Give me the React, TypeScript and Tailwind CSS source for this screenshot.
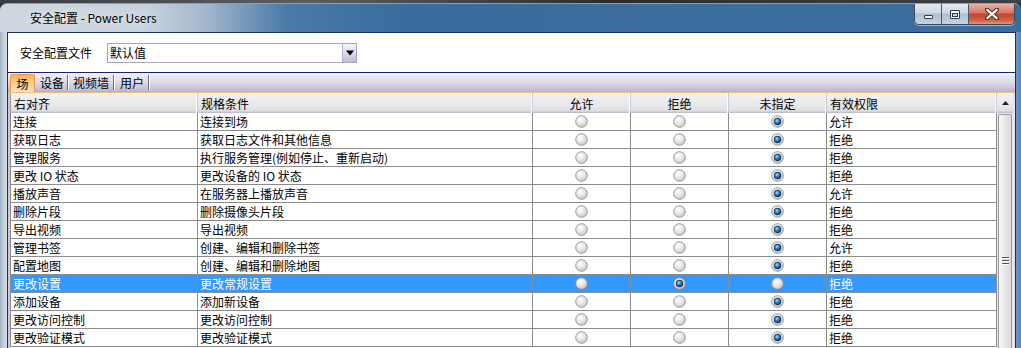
import React, { useId } from "react";

type Row = [string, string, number, string];

const rows: Row[] = [
  ["连接", "连接到场", 2, "允许"],
  ["获取日志", "获取日志文件和其他信息", 2, "拒绝"],
  ["管理服务", "执行服务管理(例如停止、重新启动)", 2, "拒绝"],
  ["更改 IO 状态", "更改设备的 IO 状态", 2, "拒绝"],
  ["播放声音", "在服务器上播放声音", 2, "允许"],
  ["删除片段", "删除摄像头片段", 2, "拒绝"],
  ["导出视频", "导出视频", 2, "拒绝"],
  ["管理书签", "创建、编辑和删除书签", 2, "允许"],
  ["配置地图", "创建、编辑和删除地图", 2, "拒绝"],
  ["更改设置", "更改常规设置", 1, "拒绝"],
  ["添加设备", "添加新设备", 2, "拒绝"],
  ["更改访问控制", "更改访问控制", 2, "拒绝"],
  ["更改验证模式", "更改验证模式", 2, "拒绝"],
];

function Radio({ checked }: { checked: boolean }) {
  const id = useId().replace(/:/g, "");
  return (
    <svg width="13" height="13" viewBox="0 0 13 13">
      <defs>
        <radialGradient id={`g${id}`} cx="40%" cy="35%" r="70%">
          <stop offset="0" stopColor="#ffffff" />
          <stop offset="0.5" stopColor="#e8e8e8" />
          <stop offset="1" stopColor="#c2c2c2" />
        </radialGradient>
        <radialGradient id={`b${id}`} cx="40%" cy="35%" r="65%">
          <stop offset="0" stopColor="#a6e0ff" />
          <stop offset="0.45" stopColor="#2f93dc" />
          <stop offset="1" stopColor="#0a3f78" />
        </radialGradient>
      </defs>
      <circle cx="6.5" cy="6.5" r="5.8" fill={`url(#g${id})`} stroke="#8f8f8f" strokeWidth="0.9" />
      {checked && (
        <>
          <circle cx="6.5" cy="6.5" r="3.7" fill="#22364c" />
          <circle cx="6.5" cy="6.5" r="3.0" fill={`url(#b${id})`} />
        </>
      )}
    </svg>
  );
}

const colW = ["w-[188px]", "w-[335px]", "w-[98px]", "w-[98px]", "w-[98px]", "w-[170px]"];

function Header() {
  const heads: [string, boolean][] = [
    ["右对齐", false],
    ["规格条件", false],
    ["允许", true],
    ["拒绝", true],
    ["未指定", true],
    ["有效权限", false],
  ];
  return (
    <div className="flex h-[20px] bg-[linear-gradient(180deg,#f3f3f3_0%,#e6e6e6_70%,#dcdce6_90%,#b5b4c8_100%)]">
      {heads.map(([t, c], i) => (
        <div
          key={i}
          className={`${colW[i]} shrink-0 flex items-center h-full border-r border-r-[#c9c9d2] shadow-[inset_-1px_0_0_#ffffff] ${
            i === 0 ? "border-l border-l-[#9c9c9c]" : ""
          } ${c ? "justify-center" : "pl-[3px]"}`}
        >
          <span className="leading-[14px] mt-[1px]">{t}</span>
        </div>
      ))}
    </div>
  );
}

function DataRow({ r, selected }: { r: Row; selected: boolean }) {
  const txt = selected ? "text-white" : "text-black";
  const cell = "shrink-0 h-full flex items-center border-r border-r-[#8c8c8c]";
  return (
    <div className={`flex h-[18px] border-b border-b-[#8c8c8c] ${selected ? "bg-[#3399ff]" : "bg-white"} ${txt}`}>
      <div className={`${colW[0]} ${cell} border-l border-l-[#8c8c8c] pl-[2px]`}>
        <span className="leading-[14px]">{r[0]}</span>
      </div>
      <div className={`${colW[1]} ${cell} pl-[2px]`}>
        <span className="leading-[14px]">{r[1]}</span>
      </div>
      {[0, 1, 2].map((k) => (
        <div key={k} className={`${colW[2 + k]} ${cell} justify-center`}>
          <Radio checked={r[2] === k} />
        </div>
      ))}
      <div className={`${colW[5]} ${cell} pl-[2px]`}>
        <span className="leading-[14px]">{r[3]}</span>
      </div>
    </div>
  );
}

function CaptionButtons() {
  return (
    <div className="flex h-[21px] mt-[0px] mr-[6px] border border-[#3b4b5e] border-t-0 rounded-b-[5px] overflow-hidden shadow-[0_1px_0_rgba(255,255,255,0.5)]">
      <div className="w-[27px] h-full flex items-center justify-center border-r border-r-[#4a5a6e] bg-[linear-gradient(180deg,#e3eaf2_0%,#cdd8e4_45%,#aebfd2_50%,#c5d3e2_100%)]">
        <div className="w-[9px] h-[4px] mt-[5px] bg-white border border-[#2c3a4a] rounded-[1px]" />
      </div>
      <div className="w-[27px] h-full flex items-center justify-center border-r border-r-[#4a5a6e] bg-[linear-gradient(180deg,#e3eaf2_0%,#cdd8e4_45%,#aebfd2_50%,#c5d3e2_100%)]">
        <div className="w-[10px] h-[9px] border border-[#2c3a4a] rounded-[1px] bg-white flex items-center justify-center">
          <div className="w-[6px] h-[4px] mt-[1px] border border-[#2c3a4a] bg-[#c9d5e2]" />
        </div>
      </div>
      <div className="w-[45px] h-full flex items-center justify-center bg-[linear-gradient(180deg,#eab3a8_0%,#d9745f_45%,#c4412a_50%,#d4654c_85%,#e59a80_100%)]">
        <svg width="14" height="12" viewBox="0 0 14 12">
          <path d="M2 1.5 L12 10.5 M12 1.5 L2 10.5" stroke="#3a1a14" strokeWidth="4" strokeLinecap="round" />
          <path d="M2.3 1.8 L11.7 10.2 M11.7 1.8 L2.3 10.2" stroke="#ffffff" strokeWidth="2.4" strokeLinecap="round" />
        </svg>
      </div>
    </div>
  );
}

export default function App() {
  const font = "font-['Noto_Sans_CJK_SC','Noto_Sans',sans-serif]";
  return (
    <div className={`w-[1021px] h-[348px] overflow-hidden bg-[#2c3036] text-[12px] text-black ${font}`}>
      <div className="h-[3px] bg-[linear-gradient(90deg,#3a3d42_0%,#5a5d62_30%,#2a2c30_60%,#3e4146_100%)]" />
      <div className="h-[345px] flex flex-col rounded-t-[7px] overflow-hidden bg-[linear-gradient(90deg,#cfd8e1_0%,#c8d3de_14%,#a4b8cd_20%,#4b7aa8_28%,#3a6b9e_40%,#3d6e9f_70%,#3b6c9e_100%)] border-t border-t-[#8aa0b8]">
        {/* Title bar */}
        <div className="h-[28px] flex items-start justify-between shrink-0">
          <div className="pl-[30px] pt-[6px] text-[12px] leading-[16px] text-black [text-shadow:0_0_6px_rgba(255,255,255,0.9)]">
            安全配置 - Power Users
          </div>
          <CaptionButtons />
        </div>
        {/* Body */}
        <div className="flex flex-1 min-h-0">
          <div className="w-[7px] shrink-0 bg-[linear-gradient(90deg,#9fb2c6_0%,#c9d3dd_60%,#d4dbe3_100%)]" />
          <div className="flex-1 min-w-0 flex flex-col border-l border-r border-t border-[#1e2f55] bg-white">
            {/* top section */}
            <div className="h-[40px] shrink-0 flex items-center border-b border-b-[#1a2370]">
              <div className="w-[99px] shrink-0 pl-[12px] leading-[16px]">安全配置文件</div>
              <div className="w-[250px] h-[20px] flex border border-[#a7a6c4] bg-white">
                <div className="flex-1 pl-[2px] flex items-center leading-[16px]">默认值</div>
                <div className="w-[14px] h-full flex items-center justify-center bg-[linear-gradient(180deg,#f4f4f8_0%,#dcdce6_50%,#bdbcd0_100%)] border-l border-l-[#b5b4cc]">
                  <svg width="8" height="6" viewBox="0 0 8 6">
                    <path d="M0 0.5 H8 L4 5.5 Z" fill="#000" />
                  </svg>
                </div>
              </div>
            </div>
            {/* tab strip */}
            <div className="h-[20px] shrink-0 flex items-end pl-[2px] bg-[linear-gradient(180deg,#f1f1f5_0%,#dedde8_45%,#c4c2d6_85%,#b3b1c8_100%)] border-b border-b-[#f4bd7c]">
              <div className="h-[18px] w-[25px] flex items-center justify-center border border-b-0 border-[#e59a45] rounded-t-[2px] bg-[linear-gradient(180deg,#f9b15c_0%,#fbc786_40%,#fde2bf_100%)]">
                <span className="leading-[14px]">场</span>
              </div>
              <div className="h-[18px] flex items-center pl-[5px] pr-[3px]">
                <span className="leading-[14px]">设备</span>
              </div>
              <div className="h-[15px] w-[2px] mb-[2px] border-l border-l-[#6e6e80] border-r border-r-white" />
              <div className="h-[18px] flex items-center pl-[4px] pr-[4px]">
                <span className="leading-[14px]">视频墙</span>
              </div>
              <div className="h-[15px] w-[2px] mb-[2px] border-l border-l-[#6e6e80] border-r border-r-white" />
              <div className="h-[18px] flex items-center pl-[5px] pr-[4px]">
                <span className="leading-[14px]">用户</span>
              </div>
              <div className="h-[15px] w-[2px] mb-[2px] border-l border-l-[#6e6e80] border-r border-r-white" />
            </div>
            {/* table area */}
            <div className="flex flex-1 min-h-0 pl-[2px] bg-[#c9c8da]">
              <div className="w-[987px] shrink-0 flex flex-col bg-white">
                <Header />
                {rows.map((r, i) => (
                  <DataRow key={i} r={r} selected={i === 9} />
                ))}
              </div>
              <div className="w-[16px] shrink-0 flex flex-col bg-[#e9e9ec]">
                <div className="h-[20px] flex items-center justify-center bg-[linear-gradient(180deg,#f3f3f3_0%,#e6e6e6_70%,#dcdce6_90%,#b5b4c8_100%)]">
                  <svg width="7" height="4" viewBox="0 0 7 4">
                    <path d="M0 4 L3.5 0 L7 4 Z" fill="#222" />
                  </svg>
                </div>
                <div className="flex-1 mt-[1px] mx-[1px] rounded-t-[2px] border border-b-0 border-[#9a9a9a] bg-[linear-gradient(90deg,#f7f7f7_0%,#ececec_40%,#d8d8d8_100%)] flex flex-col items-center">
                  <div className="mt-[142px] flex flex-col gap-[1px]">
                    <div className="w-[7px] h-[2px] border-t border-t-[#555] border-b border-b-white" />
                    <div className="w-[7px] h-[2px] border-t border-t-[#555] border-b border-b-white" />
                    <div className="w-[7px] h-[2px] border-t border-t-[#555] border-b border-b-white" />
                  </div>
                </div>
              </div>
              <div className="w-[2px] shrink-0 bg-[#e4e4ea]" />
            </div>
          </div>
          <div className="w-[5px] shrink-0 bg-[linear-gradient(90deg,#6e94bd_0%,#5a86b4_100%)]" />
        </div>
      </div>
    </div>
  );
}
